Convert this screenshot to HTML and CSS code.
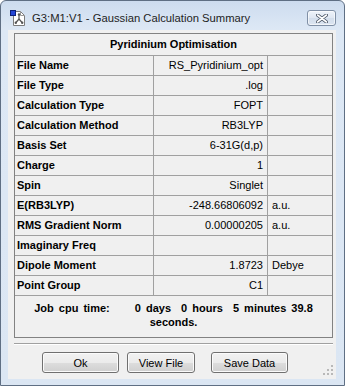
FILE: index.html
```html
<!DOCTYPE html>
<html lang="en">
<head>
  <meta charset="UTF-8">
  <title>Gaussian Calculation Summary</title>
  <link rel="stylesheet" href="styles.css">
</head>
<body>
  <div class="window">
    <div class="titlebar">
      <svg class="app-icon" width="16" height="16" viewBox="0 0 16 16">
        <path d="M3.5 1.5 H10.5 L14.5 5.5 V15.5 H3.5 Z" fill="#fff" stroke="#7c7c7c"/>
        <path d="M10.5 1.5 V5.5 H14.5" fill="none" stroke="#9a9a9a"/>
        <line x1="9" y1="5" x2="9" y2="9" stroke="#555" stroke-width="1.2"/>
        <line x1="9" y1="9" x2="6" y2="12.5" stroke="#555" stroke-width="1.2"/>
        <line x1="9" y1="9" x2="12" y2="12.5" stroke="#555" stroke-width="1.2"/>
        <circle cx="9" cy="4.5" r="1.2" fill="#555"/>
        <circle cx="5.8" cy="12.8" r="1.2" fill="#555"/>
        <circle cx="12.2" cy="12.8" r="1.2" fill="#555"/>
        <rect x="0.5" y="0.5" width="5" height="5" fill="#2346d8" stroke="#0c1f7a"/>
      </svg>
      <span class="title">G3:M1:V1 - Gaussian Calculation Summary</span>
      <div class="close">
        <svg width="12" height="9" viewBox="0 0 12 9">
          <path d="M1.5 1 L10.5 8 M10.5 1 L1.5 8" stroke="#4a5566" stroke-width="3.4" stroke-linecap="round"/>
          <path d="M1.5 1 L10.5 8 M10.5 1 L1.5 8" stroke="#fff" stroke-width="1.6" stroke-linecap="round"/>
        </svg>
      </div>
    </div>

    <div class="client">
      <div class="summary">
        <div class="heading">Pyridinium Optimisation</div>
        <div class="row"><div class="label">File Name</div><div class="value">RS_Pyridinium_opt</div><div class="unit"></div></div>
        <div class="row"><div class="label">File Type</div><div class="value">.log</div><div class="unit"></div></div>
        <div class="row"><div class="label">Calculation Type</div><div class="value">FOPT</div><div class="unit"></div></div>
        <div class="row"><div class="label">Calculation Method</div><div class="value">RB3LYP</div><div class="unit"></div></div>
        <div class="row"><div class="label">Basis Set</div><div class="value">6-31G(d,p)</div><div class="unit"></div></div>
        <div class="row"><div class="label">Charge</div><div class="value">1</div><div class="unit"></div></div>
        <div class="row"><div class="label">Spin</div><div class="value">Singlet</div><div class="unit"></div></div>
        <div class="row"><div class="label">E(RB3LYP)</div><div class="value">-248.66806092</div><div class="unit">a.u.</div></div>
        <div class="row"><div class="label">RMS Gradient Norm</div><div class="value">0.00000205</div><div class="unit">a.u.</div></div>
        <div class="row"><div class="label">Imaginary Freq</div><div class="value"></div><div class="unit"></div></div>
        <div class="row"><div class="label">Dipole Moment</div><div class="value">1.8723</div><div class="unit">Debye</div></div>
        <div class="row"><div class="label">Point Group</div><div class="value">C1</div><div class="unit"></div></div>
        <div class="cpu"><span class="cpu-label">Job cpu time:</span>0 days&nbsp; 0 hours&nbsp; 5 minutes 39.8<br>seconds.</div>
      </div>

      <div class="separator"></div>

      <div class="buttons">
        <button class="ok">Ok</button>
        <button class="view">View File</button>
        <button class="save">Save Data</button>
      </div>

      <svg class="grip" width="11" height="11" viewBox="0 0 11 11">
        <rect x="8" y="0" width="2" height="2" fill="#b8b8b8"/>
        <rect x="4" y="4" width="2" height="2" fill="#b8b8b8"/>
        <rect x="8" y="4" width="2" height="2" fill="#b8b8b8"/>
        <rect x="0" y="8" width="2" height="2" fill="#b8b8b8"/>
        <rect x="4" y="8" width="2" height="2" fill="#b8b8b8"/>
        <rect x="8" y="8" width="2" height="2" fill="#b8b8b8"/>
      </svg>
    </div>
  </div>
</body>
</html>
```

FILE: styles.css
```css
body {
  margin: 0;
  font-family: "Liberation Sans", Arial, sans-serif;
  font-size: 11px;
  color: #000;
  background: #fff;
}

.window {
  width: 345px;
  height: 386px;
  box-sizing: border-box;
  border: 1px solid #5f6f84;
  border-radius: 6px 6px 0 0;
  background: linear-gradient(#cddcef, #dde8f5 28px, #dbe6f3);
  padding: 0 8px 6px 7px;
  display: flex;
  flex-direction: column;
}

.titlebar {
  height: 29px;
  box-sizing: border-box;
  padding: 9px 0 0 2px;
  display: flex;
  align-items: flex-start;
}

.app-icon {
  flex: none;
}

.title {
  margin-left: 6px;
  font-size: 11.25px;
  line-height: 16px;
  color: #1e1e1e;
}

.close {
  margin-left: auto;
  width: 29px;
  height: 16px;
  box-sizing: border-box;
  border: 1px solid #8090a6;
  border-radius: 3px;
  background: linear-gradient(#eef3fa, #dfe7f2 50%, #d3deec 51%, #dce5f1);
  box-shadow: inset 0 0 0 1px rgba(255, 255, 255, 0.6);
  display: flex;
  align-items: center;
  justify-content: center;
}

.client {
  flex: 1;
  position: relative;
  background: #f0f0f0;
  padding: 3px 3px 6px 6px;
  display: flex;
  flex-direction: column;
}

.summary {
  border: 1px solid #828282;
}

.heading {
  height: 22px;
  box-sizing: border-box;
  line-height: 21px;
  border-bottom: 1px solid #a0a0a0;
  text-align: center;
  font-weight: bold;
}

.row {
  display: grid;
  grid-template-columns: 139px 114px 1fr;
  height: 20px;
  box-sizing: border-box;
  line-height: 19px;
  border-bottom: 1px solid #a0a0a0;
}

.label {
  font-weight: bold;
  padding-left: 2px;
  border-right: 1px solid #a0a0a0;
  white-space: nowrap;
}

.value {
  text-align: right;
  padding-right: 4px;
  border-right: 1px solid #a0a0a0;
  white-space: nowrap;
}

.unit {
  padding-left: 4px;
}

.cpu {
  padding: 5px 0 8px;
  line-height: 14px;
  text-align: center;
  font-weight: bold;
  word-spacing: 2px;
}

.cpu-label {
  margin-right: 25px;
}

.separator {
  margin-top: 5px;
  border-top: 1px solid #a0a0a0;
  border-bottom: 1px solid #fff;
}

.buttons {
  margin-top: 7px;
  padding-left: 28px;
  display: flex;
}

button {
  height: 21px;
  box-sizing: border-box;
  border: 1px solid #707070;
  border-radius: 3px;
  background: linear-gradient(#f2f2f2, #ebebeb 50%, #dddddd 51%, #cfcfcf);
  box-shadow: inset 0 0 0 1px #fbfbfb;
  font-family: "Liberation Sans", Arial, sans-serif;
  font-size: 11px;
  color: #000;
  padding: 0;
}

.ok {
  width: 77px;
}

.view {
  width: 68px;
  margin-left: 8px;
}

.save {
  width: 77px;
  margin-left: 16px;
}

.grip {
  position: absolute;
  right: 2px;
  bottom: 3px;
}
```
